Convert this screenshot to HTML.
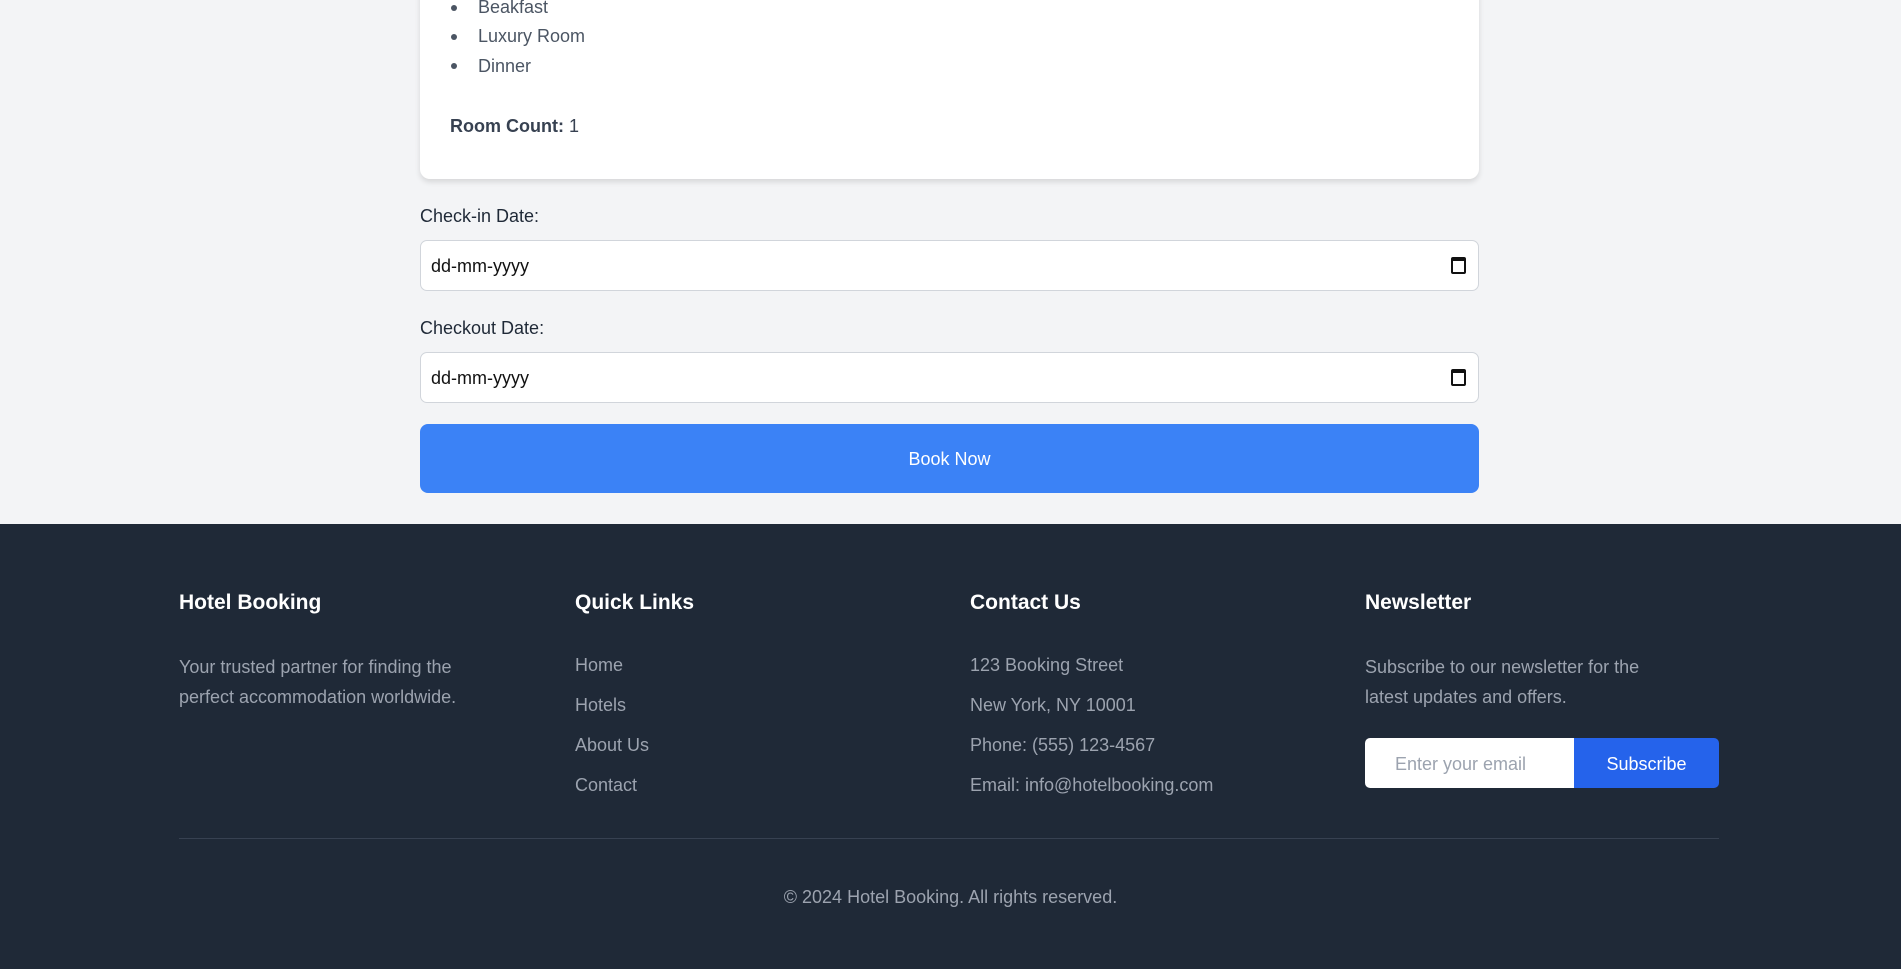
<!DOCTYPE html>
<html><head><meta charset="utf-8"><style>
*{box-sizing:border-box;margin:0;padding:0}
body{width:1901px;height:969px;overflow:hidden;background:#f3f4f6;font-family:"Liberation Sans",sans-serif;position:relative;color:#1f2937}
.a{position:absolute;white-space:nowrap}
.card{position:absolute;left:420px;top:-20px;width:1059px;height:199px;background:#fff;border-radius:10px;box-shadow:0 3px 6px rgba(0,0,0,.12)}
.li{font-size:18px;color:#4b5563;left:478px}
.dot{position:absolute;left:451px;width:6px;height:6px;border-radius:50%;background:#4b5563}
.lbl{font-size:18px;color:#1f2937;left:420px}
.inp{position:absolute;left:420px;width:1059px;height:51px;background:#fff;border:1px solid #d1d5db;border-radius:7px}
.inp span{position:absolute;left:10px;top:15px;font-size:18px;color:#111}
.cal{position:absolute;right:12px;top:16px;width:15px;height:17px;border:2px solid #111;border-top-width:4px;border-radius:2px}
.btn{position:absolute;left:420px;top:424px;width:1059px;height:69px;background:#3b82f6;border-radius:8px;color:#fff;font-size:18px;text-align:center;line-height:71px}
footer{position:absolute;left:0;top:524px;width:1901px;height:445px;background:#1f2937}
.h{font-size:21px;font-weight:bold;color:#fff}
.t{font-size:18px;color:#9ca3af}
</style></head><body>
<div class="card"></div>
<div class="dot" style="top:5px"></div><div class="a li" style="top:-3px">Beakfast</div>
<div class="dot" style="top:34px"></div><div class="a li" style="top:26px">Luxury Room</div>
<div class="dot" style="top:63px"></div><div class="a li" style="top:56px">Dinner</div>
<div class="a" style="left:450px;top:116px;font-size:18px;color:#374151"><b>Room Count:</b> 1</div>
<div class="a lbl" style="top:206px">Check-in Date:</div>
<div class="inp" style="top:240px"><span>dd-mm-yyyy</span><div class="cal"></div></div>
<div class="a lbl" style="top:318px">Checkout Date:</div>
<div class="inp" style="top:352px"><span>dd-mm-yyyy</span><div class="cal"></div></div>
<div class="btn">Book Now</div>
<footer>
<div class="a h" style="left:179px;top:67px">Hotel Booking</div>
<div class="a h" style="left:575px;top:67px">Quick Links</div>
<div class="a h" style="left:970px;top:67px">Contact Us</div>
<div class="a h" style="left:1365px;top:67px">Newsletter</div>
<div class="a t" style="left:179px;top:128px;line-height:30px">Your trusted partner for finding the<br>perfect accommodation worldwide.</div>
<div class="a t" style="left:575px;top:131px">Home</div>
<div class="a t" style="left:575px;top:171px">Hotels</div>
<div class="a t" style="left:575px;top:211px">About Us</div>
<div class="a t" style="left:575px;top:251px">Contact</div>
<div class="a t" style="left:970px;top:131px">123 Booking Street</div>
<div class="a t" style="left:970px;top:171px">New York, NY 10001</div>
<div class="a t" style="left:970px;top:211px">Phone: (555) 123-4567</div>
<div class="a t" style="left:970px;top:251px">Email: info@hotelbooking.com</div>
<div class="a t" style="left:1365px;top:128px;line-height:30px">Subscribe to our newsletter for the<br>latest updates and offers.</div>
<div class="a" style="left:1365px;top:214px;width:210px;height:50px;background:#fff;border-radius:5px 0 0 5px"><span style="position:absolute;left:30px;top:16px;font-size:18px;color:#9ca3af">Enter your email</span></div>
<div class="a" style="left:1574px;top:214px;width:145px;height:50px;background:#2563eb;border-radius:0 5px 5px 0;color:#fff;font-size:18px;text-align:center;line-height:52px">Subscribe</div>
<div class="a" style="left:179px;top:314px;width:1540px;height:1px;background:#374151"></div>
<div class="a t" style="left:0;width:1901px;text-align:center;top:363px">© 2024 Hotel Booking. All rights reserved.</div>
</footer>
</body></html>
